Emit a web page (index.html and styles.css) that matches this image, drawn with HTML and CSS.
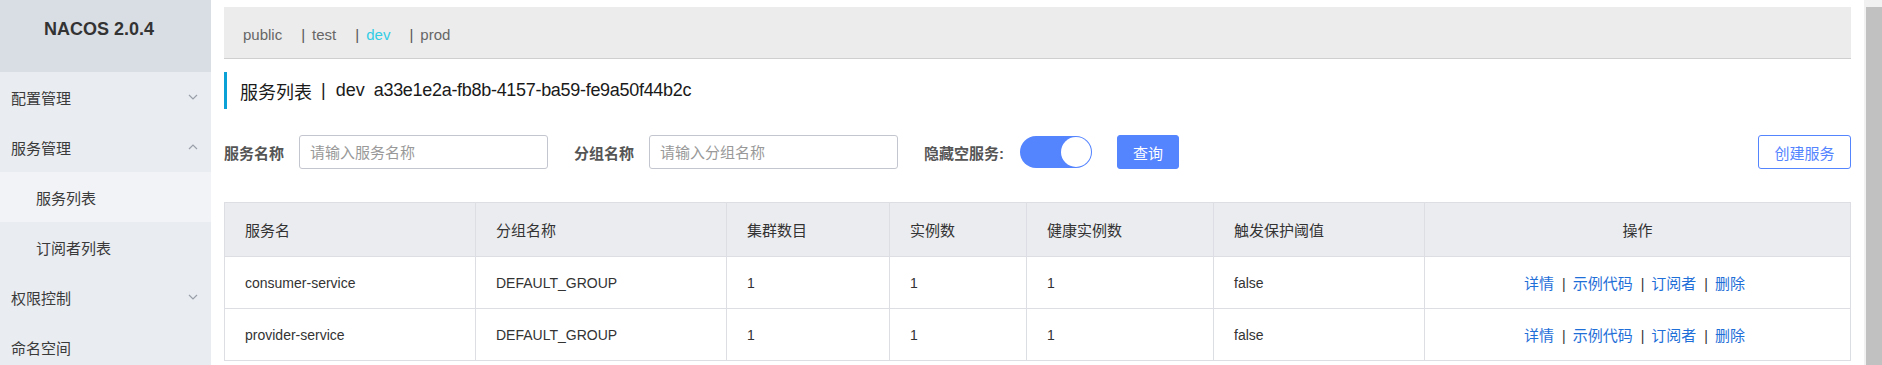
FILE: index.html
```html
<!DOCTYPE html>
<html lang="zh-CN">
<head>
<meta charset="utf-8">
<title>Nacos</title>
<link rel="stylesheet" href="styles.css">
</head>
<body>
<div class="app">
  <aside class="sidebar">
    <div class="brand">NACOS 2.0.4</div>
    <ul class="menu">
      <li class="menu-item"><span>配置管理</span><svg class="chev" width="10" height="6" viewBox="0 0 10 6"><path d="M1 1l4 4 4-4" fill="none" stroke="#9aa0aa" stroke-width="1.2"/></svg></li>
      <li class="menu-item"><span>服务管理</span><svg class="chev" width="10" height="6" viewBox="0 0 10 6"><path d="M1 5l4-4 4 4" fill="none" stroke="#9aa0aa" stroke-width="1.2"/></svg></li>
      <li class="menu-item sub active"><span>服务列表</span></li>
      <li class="menu-item sub"><span>订阅者列表</span></li>
      <li class="menu-item"><span>权限控制</span><svg class="chev" width="10" height="6" viewBox="0 0 10 6"><path d="M1 1l4 4 4-4" fill="none" stroke="#9aa0aa" stroke-width="1.2"/></svg></li>
      <li class="menu-item"><span>命名空间</span></li>
    </ul>
  </aside>

  <main class="main">
    <div class="ns-bar">
      <span class="ns">public</span>
      <span class="sep">|</span><span class="ns">test</span>
      <span class="sep">|</span><span class="ns current">dev</span>
      <span class="sep">|</span><span class="ns">prod</span>
    </div>

    <h1 class="page-title">
      <span>服务列表</span><span class="title-sep">|</span><span class="title-ns">dev</span><span class="title-id">a33e1e2a-fb8b-4157-ba59-fe9a50f44b2c</span>
    </h1>

    <div class="filters">
      <label class="f-label">服务名称</label>
      <input class="f-input" type="text" placeholder="请输入服务名称">
      <label class="f-label">分组名称</label>
      <input class="f-input" type="text" placeholder="请输入分组名称">
      <label class="f-label">隐藏空服务:</label>
      <span class="switch"><span class="knob"></span></span>
      <button class="btn primary">查询</button>
      <button class="btn outline">创建服务</button>
    </div>

    <table class="table">
      <colgroup>
        <col class="c1"><col class="c2"><col class="c3"><col class="c4"><col class="c5"><col class="c6"><col class="c7">
      </colgroup>
      <thead>
        <tr>
          <th>服务名</th><th>分组名称</th><th>集群数目</th><th>实例数</th><th>健康实例数</th><th>触发保护阈值</th><th class="center">操作</th>
        </tr>
      </thead>
      <tbody>
        <tr>
          <td>consumer-service</td><td>DEFAULT_GROUP</td><td>1</td><td>1</td><td>1</td><td>false</td>
          <td class="center"><a>详情</a><span class="bar">|</span><a>示例代码</a><span class="bar">|</span><a>订阅者</a><span class="bar">|</span><a>删除</a></td>
        </tr>
        <tr>
          <td>provider-service</td><td>DEFAULT_GROUP</td><td>1</td><td>1</td><td>1</td><td>false</td>
          <td class="center"><a>详情</a><span class="bar">|</span><a>示例代码</a><span class="bar">|</span><a>订阅者</a><span class="bar">|</span><a>删除</a></td>
        </tr>
      </tbody>
    </table>
  </main>

  <div class="scrollbar"><div class="thumb"></div></div>
</div>
</body>
</html>
```

FILE: styles.css
```css
* { box-sizing: border-box; }
html, body { margin: 0; padding: 0; height: 100%; overflow: hidden; }
body {
  font-family: "Liberation Sans", Arial, "Noto Sans CJK SC", sans-serif;
  font-size: 14px;
  color: #333;
  background: #fff;
}

.app { display: flex; height: 100vh; }

/* Sidebar */
.sidebar { width: 211px; flex: none; background: #e9ecf1; }
.brand {
  height: 72px;
  background: #d9dde4;
  text-align: center;
  font-weight: bold;
  font-size: 18px;
  line-height: 22px;
  padding: 18px 13px 0 0;
  color: #333;
}
.menu { list-style: none; margin: 0; padding: 0; }
.menu-item {
  height: 50px;
  display: flex;
  align-items: center;
  justify-content: space-between;
  padding: 0 12px 0 11px;
  font-size: 15px;
  color: #3a3a3a;
}
.menu-item.sub { padding-left: 36px; }
.menu-item.active { background: #f2f3f6; }
.chev { margin-right: 1px; }

/* Main */
.main { flex: 1; min-width: 0; padding: 7px 13px 0 13px; }

.ns-bar {
  height: 52px;
  background: #ececec;
  border-bottom: 1px solid #cfcfcf;
  display: flex;
  align-items: center;
  padding: 3px 0 0 19px;
  color: #666;
  font-size: 15px;
}
.ns-bar .ns { margin-right: 19px; }
.ns-bar .sep { margin-right: 7px; color: #555; }
.ns-bar .current { color: #33cde5; }

.page-title {
  margin: 13px 0 0 0;
  height: 37px;
  border-left: 3px solid #0ba0d6;
  padding-left: 13px;
  display: flex;
  align-items: center;
  font-size: 18px;
  font-weight: normal;
  color: #1a1a1a;
}
.title-sep { margin: 0 10px 0 9px; }
.title-ns { margin-right: 9px; }
.title-id { letter-spacing: -0.3px; }

.filters {
  margin-top: 26px;
  display: flex;
  align-items: center;
  height: 34px;
}
.f-label {
  font-weight: bold;
  font-size: 15px;
  color: #555;
  margin-right: 15px;
}
.f-input {
  width: 249px;
  height: 34px;
  border: 1px solid #c4c6cf;
  border-radius: 3px;
  padding: 0 10px;
  font-family: inherit;
  font-size: 15px;
  color: #333;
  margin-right: 26px;
  outline: none;
}
.f-input::placeholder { color: #999; }
.switch {
  width: 72px;
  height: 32px;
  border-radius: 16px;
  background: #5584ff;
  display: flex;
  justify-content: flex-end;
  align-items: center;
  padding-right: 1px;
  margin-left: 1px;
  margin-right: 25px;
}
.knob {
  width: 30px;
  height: 30px;
  border-radius: 50%;
  background: #fff;
}
.btn {
  height: 34px;
  border-radius: 3px;
  font-family: inherit;
  font-size: 15px;
  padding: 0;
  cursor: pointer;
}
.btn.primary { background: #5584ff; border: 1px solid #5584ff; color: #fff; width: 62px; }
.btn.outline { margin-left: auto; background: #fff; border: 1px solid #5584ff; color: #5584ff; width: 93px; }

.table {
  margin-top: 33px;
  width: 100%;
  border-collapse: collapse;
  table-layout: fixed;
  border: 1px solid #dcdee3;
}
.c1 { width: 251px; } .c2 { width: 251px; } .c3 { width: 163px; } .c4 { width: 137px; }
.c5 { width: 187px; } .c6 { width: 211px; } .c7 { width: auto; }
.table th, .table td {
  border: 1px solid #dcdee3;
  padding: 0 20px;
  text-align: left;
  font-size: 14px;
  color: #333;
}
.table th { background: #ebecf0; font-weight: normal; height: 54px; font-size: 15px; }
.table td { height: 52px; }
.table td.center, .table th.center { text-align: center; }
.table td.center { padding-right: 26px; }
.table a { color: #1f6fd8; font-size: 15px; }
.table .bar { margin: 0 7px 0 8px; color: #333; }

/* Scrollbar column */
.scrollbar { width: 18px; flex: none; background: #f1f1f1; padding: 7px 0 0 2px; }
.thumb { height: 100%; background: #c1c1c1; }
```
